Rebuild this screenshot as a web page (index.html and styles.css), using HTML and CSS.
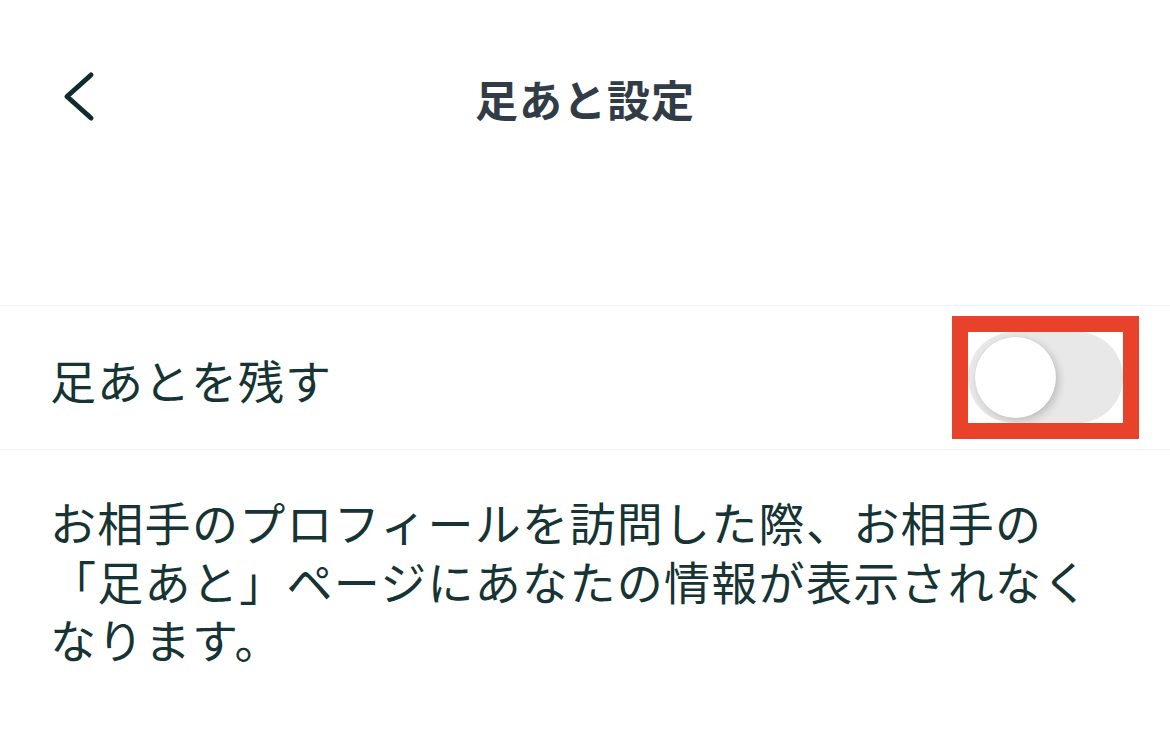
FILE: index.html
```html
<!DOCTYPE html>
<html lang="ja">
<head>
<meta charset="utf-8">
<title>足あと設定</title>
<link rel="stylesheet" href="styles.css">
</head>
<body>
<div class="screen">
  <header class="nav">
    <div class="nav-left">
      <svg class="back" width="32" height="52" viewBox="0 0 32 52" aria-label="戻る">
        <polyline points="28,4 4,25.5 28,47" fill="none" stroke="#0f2b2c" stroke-width="5" stroke-linecap="round" stroke-linejoin="round"/>
      </svg>
    </div>
    <h1 class="nav-title">足あと設定</h1>
    <div class="nav-right"></div>
  </header>

  <section class="setting-row">
    <span class="setting-label">足あとを残す</span>
    <div class="toggle-wrap">
      <div class="toggle">
        <div class="knob"></div>
      </div>
      <div class="highlight"></div>
    </div>
  </section>

  <p class="description">お相手のプロフィールを訪問した際、お相手の「足あと」ページにあなたの情報が表示されなくなります。</p>
</div>
</body>
</html>
```

FILE: styles.css
```css
html, body {
  margin: 0;
  padding: 0;
  background: #ffffff;
}

body {
  font-family: "Noto Sans CJK JP", "Noto Sans", sans-serif;
  color: #163434;
}

.screen {
  width: 1170px;
  height: 748px;
  overflow: hidden;
}

.nav {
  display: grid;
  grid-template-columns: 1fr auto 1fr;
  align-items: center;
  height: 194px;
}

.nav-left {
  padding-left: 63px;
  display: flex;
  align-items: center;
}

.back {
  display: block;
}

.nav-title {
  margin: 0;
  font-size: 43px;
  font-weight: 700;
  letter-spacing: 1px;
  color: #323c46;
  line-height: 1.2;
  padding-top: 4px;
}

.setting-row {
  margin-top: 111px;
  height: 143px;
  border-top: 1px solid #eef1f1;
  border-bottom: 1px solid #eef1f1;
  display: flex;
  align-items: center;
  justify-content: space-between;
  padding: 0 47px 0 50px;
}

.setting-label {
  font-size: 46px;
  letter-spacing: 1px;
  line-height: 1;
  padding-top: 2px;
}

.toggle-wrap {
  position: relative;
  width: 155px;
  height: 91px;
}

.toggle {
  width: 155px;
  height: 91px;
  border-radius: 46px;
  background: #e8e8e8;
  box-sizing: border-box;
  padding: 5px 0 0 7px;
}

.knob {
  width: 81px;
  height: 81px;
  border-radius: 50%;
  background: #ffffff;
  box-shadow: 3px 3px 8px rgba(0, 0, 0, 0.18), 0 0 2px rgba(0, 0, 0, 0.08);
}

.highlight {
  position: absolute;
  top: -16px;
  left: -16px;
  right: -16px;
  bottom: -16px;
  border: 16px solid #e8432a;
}

.description {
  margin: 0;
  padding: 42px 50px 0 50px;
  font-size: 46px;
  letter-spacing: 1.3px;
  line-height: 58.5px;
}
```
